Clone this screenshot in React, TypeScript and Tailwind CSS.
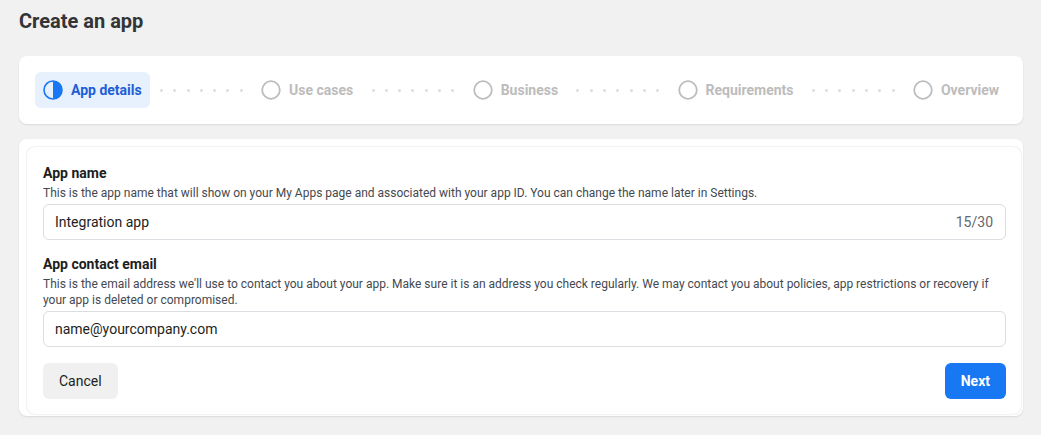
import type { ReactNode } from 'react'

const steps = ['App details', 'Use cases', 'Business', 'Requirements', 'Overview']

function Dots() {
  return (
    <div className="flex-1 flex items-center justify-evenly">
      {Array.from({ length: 7 }).map((_, i) => (
        <span key={i} className="w-[3px] h-[3px] rounded-full bg-[#dcdcdc]" />
      ))}
    </div>
  )
}

function Step({ label, active }: { label: string; active?: boolean }) {
  if (active) {
    return (
      <div className="flex items-center gap-2 h-9 px-2 rounded-md bg-[#e7f0fd]">
        <svg width="20" height="20" viewBox="0 0 20 20">
          <circle cx="10" cy="10" r="9" fill="none" stroke="#1877f2" strokeWidth="1.6" />
          <path d="M10 1 A9 9 0 0 1 10 19 Z" fill="#1877f2" />
        </svg>
        <span className="text-[14px] font-bold text-[#1d5ed6]">{label}</span>
      </div>
    )
  }
  return (
    <div className="flex items-center gap-2 h-9 px-2">
      <svg width="20" height="20" viewBox="0 0 20 20">
        <circle cx="10" cy="10" r="8.8" fill="none" stroke="#bdbdbd" strokeWidth="1.8" />
      </svg>
      <span className="text-[14px] font-bold text-[#bcbcbc]">{label}</span>
    </div>
  )
}

function Field({ label, hint, children }: { label: string; hint: string; children: ReactNode }) {
  return (
    <div className="flex flex-col">
      <p className="text-[14px] font-bold text-[#1c1e21] leading-[18px]">{label}</p>
      <p className="text-[12px] text-[#444950] leading-4 mt-[3px] mb-[3px]">{hint}</p>
      {children}
    </div>
  )
}

export default function App() {
  return (
    <div
      className="min-h-[435px] w-[1041px] bg-[#f1f1f1] pl-[19px] pr-[18px] pt-[9px] pb-[18px]"
      style={{ fontFamily: 'Roboto, "Liberation Sans", sans-serif' }}
    >
      <h1 className="text-[20px] font-bold text-[#333436] leading-6">Create an app</h1>

      {/* stepper */}
      <div className="mt-[23px] h-[68px] bg-white rounded-lg shadow-[0_1px_2px_rgba(0,0,0,0.1)] flex items-center px-4">
        {steps.map((s, i) => (
          <div key={s} className="contents">
            <Step label={s} active={i === 0} />
            {i < steps.length - 1 && <Dots />}
          </div>
        ))}
      </div>

      {/* form */}
      <div className="mt-[15px] bg-white rounded-lg shadow-[0_1px_2px_rgba(0,0,0,0.1)] pl-2 pt-2 pr-[2px] pb-[2px]">
        <div className="bg-white rounded-lg shadow-[0_0_2px_rgba(0,0,0,0.18)] pl-4 pr-[15px] pt-[17px] pb-[15px] flex flex-col gap-[15px]">
          <Field
            label="App name"
            hint="This is the app name that will show on your My Apps page and associated with your app ID. You can change the name later in Settings."
          >
            <div className="h-9 border border-[#dadde1] rounded-md flex items-center justify-between pl-[11px] pr-3">
              <span className="text-[14px] text-[#1c1e21]">Integration app</span>
              <span className="text-[14px] text-[#65676b]">15/30</span>
            </div>
          </Field>

          <Field
            label="App contact email"
            hint="This is the email address we'll use to contact you about your app. Make sure it is an address you check regularly. We may contact you about policies, app restrictions or recovery if your app is deleted or compromised."
          >
            <div className="h-9 border border-[#dadde1] rounded-md flex items-center pl-[11px] pr-3">
              <span className="text-[14px] text-[#1c1e21]">name@yourcompany.com</span>
            </div>
          </Field>

          <div className="flex items-center justify-between mt-[1px]">
            <button className="h-9 px-4 rounded-md bg-[#f0f0f0] text-[14px] text-[#1c1e21]">Cancel</button>
            <button className="h-9 px-4 rounded-md bg-[#1877f2] text-[14px] font-bold text-white">Next</button>
          </div>
        </div>
      </div>
    </div>
  )
}
